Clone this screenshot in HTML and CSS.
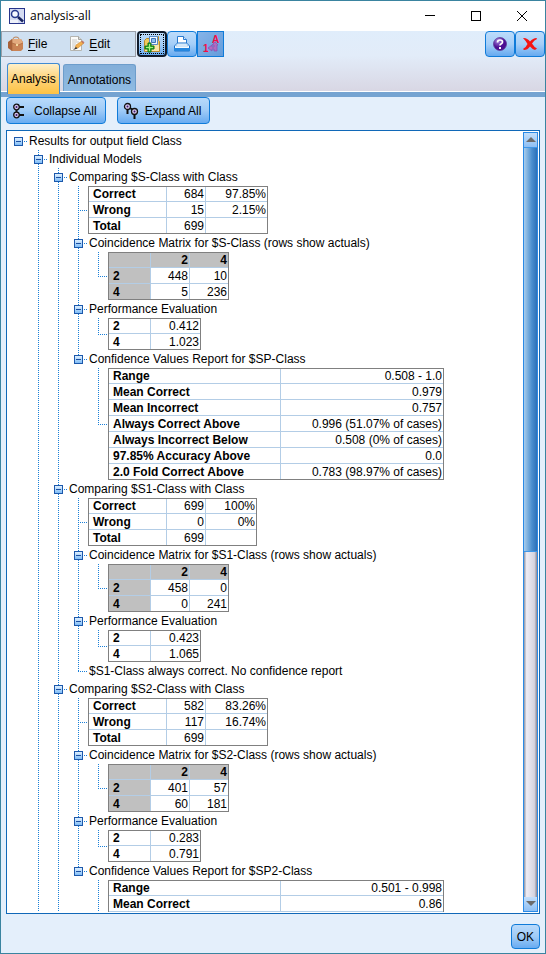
FILE: index.html
```html
<!DOCTYPE html>
<html lang="en">
<head>
<meta charset="utf-8">
<title>analysis-all</title>
<link rel="stylesheet" href="styles.css">
</head>
<body>
<div class="window">
  <header class="titlebar">
    <svg class="app-icon" width="16" height="16" viewBox="0 0 16 16"><rect x=".5" y=".5" width="15" height="15" fill="#d5dcf2" stroke="#27348b"/><path d="M1 12h8v3H1z" fill="#fff" opacity=".6"/><circle cx="6" cy="6" r="3.5" fill="#f4f8ff" stroke="#26388c" stroke-width="1.5"/><path d="M9 9l5 4.500" stroke="#17235f" stroke-width="2.500"/></svg>
    <h1 class="title">analysis-all</h1>
    <div class="window-controls">
      <button aria-label="Minimize"><svg width="12" height="12"><path d="M1 5.500h10" stroke="#000"/></svg></button>
      <button aria-label="Maximize"><svg width="12" height="12"><rect x="1.500" y="1.500" width="9" height="9" fill="none" stroke="#000"/></svg></button>
      <button aria-label="Close"><svg width="12" height="12"><path d="M1 1l10 10M11 1L1 11" stroke="#000"/></svg></button>
    </div>
  </header>

  <div class="top">
    <div class="toolbar">
      <nav class="menu">
        <button class="menu-item">
          <svg width="16" height="16" viewBox="0 0 16 16"><path d="M5 5V3q0-2 3-2t3 2v2" fill="none" stroke="#b98258"/><path d="M0 6l4-3v12l-4-3z" fill="#a8623a"/><path d="M4 3h9l2 3v7l-2 2H4z" fill="#c98355"/><path d="M4 3h9l2 4-5 2-6-2z" fill="#e3ab7f"/><path d="M4 7l6 2 5-2M4 3v12" fill="none" stroke="#a9683f" stroke-width=".7"/><rect x="8" y="8" width="2" height="2" fill="#f4d9a0"/></svg>
          <span><u>F</u>ile</span>
        </button>
        <button class="menu-item">
          <svg width="16" height="16" viewBox="0 0 16 16"><path d="M1.500 .5h8l3 3v11h-11z" fill="#fcfcfa" stroke="#b5b5b0"/><path d="M9.500 .5v3h3" fill="#dadad5" stroke="#a5a5a0"/><path d="M3 4h5M3 6h7M3 8h4M3 10h3M3 12h2" stroke="#c8c8c6"/><path d="M6 12l1-3 6-4 2 2-6 5z" fill="#f3b04d" stroke="#c98736" stroke-width=".6"/><path d="M12 5.500L13.500 4.500l2 2L14 7.800z" fill="#c07a68"/><path d="M4 14l3-3 1.500 1.500z" fill="#333"/></svg>
          <span><u>E</u>dit</span>
        </button>
      </nav>
      <button class="tool tool-default" aria-label="Save to project">
        <svg width="18" height="18" viewBox="0 0 18 18"><path d="M1.500 5.500l2-2h3v-2h9v4l1 1v10h-15z" fill="#efc95c" stroke="#b98a2c"/><path d="M6.500 1.500h8v8h-8z" fill="#f3f9ff" stroke="#5a8cc8"/><path d="M8.500 3.500h4v4h-4z" fill="#8fc1ef" stroke="#3f73b8"/><path d="M2 10h14v6H2z" fill="#f9e7a8"/><path d="M5 8h3v3h3v3H8v3H5v-3H2v-3h3z" fill="#35b832" stroke="#11700f"/><path d="M6.500 9v7M3 12.500h7" stroke="#a9f17d"/></svg>
      </button>
      <button class="tool" aria-label="Print">
        <svg width="18" height="18" viewBox="0 0 18 18"><path d="M4.500 9V1.500h6l3 3V9" fill="#fff" stroke="#2a7bd0"/><path d="M10.500 1.500v3h3" fill="#cfe6fc" stroke="#2a7bd0"/><path d="M1.500 11l3-3h9l3 3v5h-15z" fill="#f4faff" stroke="#1870cb"/><path d="M4 9h10l1 2H3z" fill="#fff" stroke="#8dbfec" stroke-width=".7"/><path d="M1 13h16v3H1z" fill="#2587df"/></svg>
      </button>
      <button class="tool tool-square" aria-label="Show names or labels">
        <svg width="20" height="20" viewBox="0 0 20 20"><g fill="#f20d47" font-family="Liberation Sans, sans-serif" font-weight="700"><text x="11" y="9" font-size="10">A</text><text x="2" y="18" font-size="10">1</text></g><path d="M7 14l4-3v2h2v-2h-2l3-3 3 3h-1v6h-3v-2h-2v2z" fill="#b06bc0" stroke="#8b4bb0" stroke-width=".7"/></svg>
      </button>
      <div class="spacer"></div>
      <button class="tool" aria-label="Help">
        <svg width="16" height="16" viewBox="0 0 16 16"><defs><radialGradient id="ball" cx=".35" cy=".25"><stop offset="0" stop-color="#a98be0"/><stop offset="1" stop-color="#4c0d93"/></radialGradient></defs><circle cx="8" cy="8" r="6.500" fill="url(#ball)" stroke="#59348d" stroke-width=".7"/><path d="M5.500 6.500q0-2.500 2.500-2.500t2.500 2q0 1.200-1.500 2-1 .6-1 1.500" fill="none" stroke="#fff" stroke-width="1.700"/><rect x="7" y="11" width="2" height="2" fill="#fff"/></svg>
      </button>
      <button class="tool" aria-label="Cancel">
        <svg width="16" height="16" viewBox="0 0 16 16"><path d="M1 2q4-.5 7 3.500 3-3.500 6.500-3.500l.5 1q-3 1-5 4.500 2 3.500 5 5L13 14q-3-1-5-3.500-2.500 3.500-6 3.500L1 13q3-1.500 4.500-5Q4 5 1 2z" fill="#f51414"/></svg>
      </button>
    </div>
    <div class="tabs" role="tablist">
      <button class="tab tab-active" role="tab" aria-selected="true">Analysis</button>
      <button class="tab" role="tab" aria-selected="false">Annotations</button>
    </div>
  </div>

  <main class="content">
    <div class="actions">
      <button class="button">
        <svg width="16" height="16" viewBox="0 0 16 16"><g fill="#d9c9ef" stroke="#111" stroke-width="1.300"><path d="M7 4h5M7 12h5M4.500 7v2" stroke-width="2"/><circle cx="4.500" cy="4" r="2.800"/><circle cx="4.500" cy="12" r="2.800"/></g><circle cx="4.500" cy="4" r="1" fill="#3c1c70"/><circle cx="4.500" cy="12" r="1" fill="#3c1c70"/></svg>
        Collapse All
      </button>
      <button class="button">
        <svg width="16" height="18" viewBox="0 0 16 18"><g fill="#d9c9ef" stroke="#111" stroke-width="1.300"><path d="M4.500 7v5M11.500 12v5M7 6l3 2" stroke-width="2"/><circle cx="4.500" cy="4.500" r="3"/><circle cx="11.500" cy="9.500" r="3"/></g><circle cx="4.500" cy="4.500" r="1" fill="#3c1c70"/><circle cx="11.500" cy="9.500" r="1" fill="#3c1c70"/></svg>
        Expand All
      </button>
    </div>

    <div class="panel">
      <div class="viewport">
      <ul class="tree">
        <li><div class="row"><button class="toggle" aria-label="Collapse"></button>Results for output field Class</div>
        <ul>
          <li class="more"><div class="row"><button class="toggle" aria-label="Collapse"></button>Individual Models</div>
          <ul>
            <li><div class="row"><button class="toggle" aria-label="Collapse"></button>Comparing $S-Class with Class</div>
            <ul>
              <li class="leaf"><table class="counts">
                <tr><th>Correct</th><td>684</td><td>97.85%</td></tr>
                <tr><th>Wrong</th><td>15</td><td>2.15%</td></tr>
                <tr><th>Total</th><td>699</td><td></td></tr>
              </table></li>
              <li><div class="row"><button class="toggle" aria-label="Collapse"></button>Coincidence Matrix for $S-Class (rows show actuals)</div>
              <ul><li class="leaf"><table class="matrix">
                <tr><th></th><th>2</th><th>4</th></tr>
                <tr><th>2</th><td>448</td><td>10</td></tr>
                <tr><th>4</th><td>5</td><td>236</td></tr>
              </table></li></ul></li>
              <li><div class="row"><button class="toggle" aria-label="Collapse"></button>Performance Evaluation</div>
              <ul><li class="leaf"><table class="scores">
                <tr><th>2</th><td>0.412</td></tr>
                <tr><th>4</th><td>1.023</td></tr>
              </table></li></ul></li>
              <li><div class="row"><button class="toggle" aria-label="Collapse"></button>Confidence Values Report for $SP-Class</div>
              <ul><li class="leaf"><table class="report">
                <tr><th>Range</th><td>0.508 - 1.0</td></tr>
                <tr><th>Mean Correct</th><td>0.979</td></tr>
                <tr><th>Mean Incorrect</th><td>0.757</td></tr>
                <tr><th>Always Correct Above</th><td>0.996 (51.07% of cases)</td></tr>
                <tr><th>Always Incorrect Below</th><td>0.508 (0% of cases)</td></tr>
                <tr><th>97.85% Accuracy Above</th><td>0.0</td></tr>
                <tr><th>2.0 Fold Correct Above</th><td>0.783 (98.97% of cases)</td></tr>
              </table></li></ul></li>
            </ul></li>
            <li><div class="row"><button class="toggle" aria-label="Collapse"></button>Comparing $S1-Class with Class</div>
            <ul>
              <li class="leaf"><table class="counts counts-short">
                <tr><th>Correct</th><td>699</td><td>100%</td></tr>
                <tr><th>Wrong</th><td>0</td><td>0%</td></tr>
                <tr><th>Total</th><td>699</td><td></td></tr>
              </table></li>
              <li><div class="row"><button class="toggle" aria-label="Collapse"></button>Coincidence Matrix for $S1-Class (rows show actuals)</div>
              <ul><li class="leaf"><table class="matrix">
                <tr><th></th><th>2</th><th>4</th></tr>
                <tr><th>2</th><td>458</td><td>0</td></tr>
                <tr><th>4</th><td>0</td><td>241</td></tr>
              </table></li></ul></li>
              <li><div class="row"><button class="toggle" aria-label="Collapse"></button>Performance Evaluation</div>
              <ul><li class="leaf"><table class="scores">
                <tr><th>2</th><td>0.423</td></tr>
                <tr><th>4</th><td>1.065</td></tr>
              </table></li></ul></li>
              <li class="leaf"><div class="row note">$S1-Class always correct. No confidence report</div></li>
            </ul></li>
            <li class="more"><div class="row"><button class="toggle" aria-label="Collapse"></button>Comparing $S2-Class with Class</div>
            <ul>
              <li class="leaf"><table class="counts">
                <tr><th>Correct</th><td>582</td><td>83.26%</td></tr>
                <tr><th>Wrong</th><td>117</td><td>16.74%</td></tr>
                <tr><th>Total</th><td>699</td><td></td></tr>
              </table></li>
              <li><div class="row"><button class="toggle" aria-label="Collapse"></button>Coincidence Matrix for $S2-Class (rows show actuals)</div>
              <ul><li class="leaf"><table class="matrix">
                <tr><th></th><th>2</th><th>4</th></tr>
                <tr><th>2</th><td>401</td><td>57</td></tr>
                <tr><th>4</th><td>60</td><td>181</td></tr>
              </table></li></ul></li>
              <li><div class="row"><button class="toggle" aria-label="Collapse"></button>Performance Evaluation</div>
              <ul><li class="leaf"><table class="scores">
                <tr><th>2</th><td>0.283</td></tr>
                <tr><th>4</th><td>0.791</td></tr>
              </table></li></ul></li>
              <li><div class="row"><button class="toggle" aria-label="Collapse"></button>Confidence Values Report for $SP2-Class</div>
              <ul><li class="leaf more partial"><table class="report open">
                <tr><th>Range</th><td>0.501 - 0.998</td></tr>
                <tr><th>Mean Correct</th><td>0.86</td></tr>
              </table></li></ul></li>
            </ul></li>
          </ul></li>
        </ul></li>
      </ul>
      </div>
      <div class="scrollbar">
        <button class="arrow" aria-label="Scroll up"><svg width="10" height="6"><path d="M0 5l5-5 5 5z" fill="#6b6b6b"/></svg></button>
        <div class="track"><div class="thumb"></div></div>
        <button class="arrow" aria-label="Scroll down"><svg width="10" height="6"><path d="M0 0h10L5 5z" fill="#6b6b6b"/></svg></button>
      </div>
    </div>
    <footer class="footer"><button class="button button-ok">OK</button></footer>
  </main>
</div>
</body>
</html>
```

FILE: styles.css
```css
* { box-sizing: border-box; }

body {
  margin: 0;
  font: 12px/18px "Liberation Sans", Arial, sans-serif;
  color: #000;
}

button {
  margin: 0;
  padding: 0;
  border: 0;
  background: none;
  font: inherit;
  color: inherit;
}

svg { display: block; flex: none; }

.window {
  display: flex;
  flex-direction: column;
  height: 100vh;
  border: 1px solid #3a84a0;
  background: #e4effb;
}

/* Title bar */
.titlebar {
  display: flex;
  flex: none;
  align-items: center;
  height: 30px;
  padding-left: 8px;
  background: #fff;
}
.title {
  margin: 0 auto 0 5px;
  font: 12px/18px "Open Sans", "Noto Sans", sans-serif;
}
.window-controls { display: flex; }
.window-controls button {
  display: grid;
  place-items: center;
  width: 46px;
  height: 28px;
}

/* Toolbar and tabs */
.top {
  flex: none;
  border-bottom: 5px solid #75a3d1;
  background: linear-gradient(#e0edfb, #e2ecf9 40%, #d8d6e3);
}
.toolbar { display: flex; height: 26px; }
.menu {
  display: flex;
  align-items: center;
  gap: 22px;
  width: 135px;
  margin-right: 1px;
  padding-left: 6px;
  border: 1px solid #9a9fa8;
  background: #cfe0f1;
}
.menu-item { display: flex; align-items: center; gap: 4px; }
.menu-item u { text-underline-offset: 2px; }
.spacer { flex: 1; }

.tool {
  display: grid;
  place-items: center;
  width: 30px;
  border: 1px solid #0f7bd9;
  border-radius: 4px;
  background: linear-gradient(#bcdcfb, #a6cff8 50%, #66aaf0);
}
.tool-default {
  border: 2px solid #111c2b;
  outline: 1px dotted #000;
  outline-offset: -4px;
}
.tool-square {
  width: 27px;
  border-radius: 0;
  background: linear-gradient(135deg, #86b4e8, #649cdb);
}

.tabs {
  display: flex;
  align-items: flex-end;
  gap: 3px;
  height: 35px;
  padding-left: 6px;
  border-bottom: 1px solid #fff;
}
.tab {
  height: 27px;
  padding: 4px 4px 0;
  border: 1px solid #6d9dcb;
  border-bottom: 0;
  border-radius: 3px 3px 0 0;
  background: linear-gradient(#83aed9, #8fbbe3);
}
.tab-active {
  z-index: 1;
  height: 31px;
  margin-bottom: -3px;
  padding: 0 3px;
  border-color: #418bd2;
  background: linear-gradient(#fff0c8, #fdd57f 45%, #fdc244);
}

/* Main area */
.content {
  display: flex;
  flex: 1;
  flex-direction: column;
  min-height: 0;
  padding: 0 5px 4px;
}
.actions { display: flex; flex: none; gap: 11px; margin-bottom: 6px; }
.button {
  display: flex;
  align-items: center;
  gap: 6px;
  height: 27px;
  padding: 0 8px 0 5px;
  border: 1px solid #0f7bd9;
  border-radius: 4px;
  background: linear-gradient(#b9dafb, #9fcbf7 50%, #68abf1);
}
.footer { display: flex; flex: none; justify-content: flex-end; padding-top: 10px; }
.button-ok { height: 25px; padding: 0 5px; }

.panel {
  display: flex;
  flex: 1;
  min-height: 0;
  padding: 1px;
  border: 1px solid #1068b8;
  background: #fff;
}
.viewport { flex: 1; min-width: 0; overflow: hidden; }

/* Scroll bar */
.scrollbar {
  display: flex;
  flex: none;
  flex-direction: column;
  width: 15px;
  border: 1px solid #2b8ae6;
}
.arrow {
  display: grid;
  place-items: center;
  height: 14px;
  background: linear-gradient(#c3defa, #8dbff4);
}
.track { flex: 1; background: linear-gradient(90deg, #8d94a5, #efedf5 20%, #d6d4df 80%, #8b8795); }
.thumb {
  height: 54%;
  border: solid #3f97e8;
  border-width: 1px 0;
  background: linear-gradient(90deg, #a8cdec, #4a8fd0 60%, #2c70b8);
}

/* Result tree */
.tree, .tree ul { margin: 0; list-style: none; }
.tree { padding: 0 0 0 6px; }
.tree ul { padding: 0 0 0 20px; }
.tree li { position: relative; }
.row {
  display: flex;
  align-items: center;
  height: 18px;
  gap: 6px;
  white-space: nowrap;
}
.note { padding-left: 15px; }
.toggle {
  position: relative;
  width: 9px;
  height: 9px;
  border: 1px solid #1c58ab;
  background: linear-gradient(#1c4fa0, #1c4fa0) center / 5px 1px no-repeat,
              linear-gradient(#dff0ff, #80bdf7);
}

/* Dotted connectors: vertical trunk and horizontal stub */
.tree ul > li::before,
.tree li::after {
  content: "";
  position: absolute;
}
.tree ul > li::before {
  top: 0;
  bottom: 0;
  left: 4px;
  width: 1px;
  background: repeating-linear-gradient(#1b80d8 0 1px, transparent 1px 2px);
}
.tree ul > li:last-child::before { bottom: auto; height: 9px; }
.tree ul > li.leaf:last-child::before { height: 50%; }
.tree ul > li.more:last-child::before { height: 100%; }
.tree li::after {
  top: 9px;
  left: 10px;
  width: 4px;
  height: 1px;
  background: repeating-linear-gradient(90deg, #1b80d8 0 1px, transparent 1px 2px);
}
.tree li.leaf::after { top: 50%; left: 4px; width: 9px; }
.tree li.partial::after { display: none; }

/* Result tables */
table {
  margin-left: 14px;
  border: 1px solid #808080;
  border-spacing: 0;
  table-layout: fixed;
  line-height: 14px;
}
th, td {
  height: 16px;
  padding: 0 1px 0 4px;
  border: solid #b3cde6;
  border-width: 0 1px 1px 0;
  text-align: right;
  white-space: nowrap;
}
th:first-child { text-align: left; }
tr:first-child > * { height: 15px; }
tr:last-child > * { height: 15px; border-bottom: 0; }
tr > :last-child { border-right: 0; }

.counts { width: 180px; }
.counts-short { width: 169px; }
.counts th { width: 78px; }
.counts td:nth-child(2) { width: 39px; }
.matrix { width: 121px; }
.matrix th { background: #c0c0c0; }
.matrix th:first-child { width: 42px; }
.matrix th:nth-child(2) { width: 39px; }
.scores { width: 93px; }
.scores th { width: 42px; }
.report { width: 336px; }
.report th { width: 172px; }
.open { border-bottom: 0; }
.open tr:last-child > * { height: 16px; border-bottom: 1px solid #b3cde6; }
```
